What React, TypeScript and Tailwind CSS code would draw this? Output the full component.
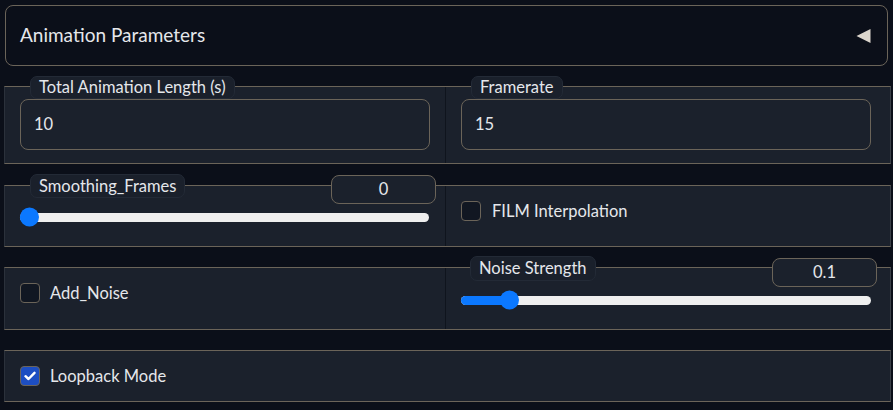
import React from "react";

const FONT = "font-['Lato','Noto_Sans',sans-serif]";

function Checkbox({ checked }: { checked?: boolean }) {
  return (
    <div
      className={
        "flex h-[20px] w-[20px] shrink-0 items-center justify-center rounded-[4px] border " +
        (checked ? "border-[#6b6459] bg-[#1d4ec2]" : "border-[#6b6459] bg-[#111722]")
      }
    >
      {checked && (
        <svg width="12" height="10" viewBox="0 0 12 10">
          <path d="M1.5 5.2 L4.5 8 L10.5 1.8" fill="none" stroke="#ffffff" strokeWidth="2.4" strokeLinecap="round" strokeLinejoin="round" />
        </svg>
      )}
    </div>
  );
}

function Pill({ children, h }: { children: React.ReactNode; h: string }) {
  return (
    <div className={"flex items-center rounded-[7px] border border-[#232a36] bg-[#1a202b] px-[8px] text-[16.5px] text-[#e5e7eb] " + h}>
      {children}
    </div>
  );
}

function Slider({ frac }: { frac: number }) {
  return (
    <div className="relative flex h-[20px] items-center">
      <div className="relative h-[9px] w-full rounded-full bg-[#efefef]">
        <div
          className="absolute left-0 top-0 h-full rounded-full bg-[#0b78ff]"
          style={{ width: `calc(${frac} * (100% - 19px) + 9.5px)` }}
        />
        <div
          className="absolute top-1/2 h-[19px] w-[19px] -translate-y-1/2 rounded-full bg-[#0b78ff]"
          style={{ left: `calc(${frac} * (100% - 19px))` }}
        />
      </div>
    </div>
  );
}

function NumberBox({ value }: { value: string }) {
  return (
    <div className="flex h-[29px] w-[105px] items-center justify-center rounded-[8px] border border-[#6b6459] bg-[#1b212c] text-[16.5px] text-[#e5e7eb]">
      {value}
    </div>
  );
}

function Row({ children, h }: { children: React.ReactNode; h: string }) {
  return (
    <div className={"ml-[4px] flex w-[887px] border-y border-l border-r border-y-[#6b6459] border-l-[#2b313b] border-r-[#3a3f47] bg-[#1b212c] " + h}>
      {children}
    </div>
  );
}

export default function App() {
  return (
    <div className={"h-[410px] w-[893px] overflow-hidden bg-[#0b0f19] pt-[5px] text-[#e5e7eb] " + FONT}>
      {/* Accordion header */}
      <div className="mx-[5px] flex h-[61px] items-center justify-between rounded-[8px] border border-[#6b6459] pl-[14px] pr-[16px]">
        <span className="text-[19px] text-[#e5e7eb]">Animation Parameters</span>
        <svg width="15" height="16" viewBox="0 0 15 16">
          <path d="M0.5 8 L14.5 1 L14.5 15 Z" fill="#dcd6cd" />
        </svg>
      </div>

      {/* Row 1 */}
      <div className="mt-[20px]">
        <Row h="h-[78px]">
          <div className="flex w-[441px] flex-col border-r border-[#0f141d] px-[15px]">
            <div className="-mt-[11px] ml-[10px] flex">
              <Pill h="h-[23px]">Total Animation Length (s)</Pill>
            </div>
            <div className="flex h-[51px] items-center rounded-[8px] border border-[#6b6459] bg-[#1b212c] px-[13px] text-[16.5px]">10</div>
          </div>
          <div className="flex flex-1 flex-col pl-[15px] pr-[19px]">
            <div className="-mt-[11px] ml-[10px] flex">
              <Pill h="h-[23px]">Framerate</Pill>
            </div>
            <div className="flex h-[51px] items-center rounded-[8px] border border-[#6b6459] bg-[#1b212c] px-[13px] text-[16.5px]">15</div>
          </div>
        </Row>
      </div>

      {/* Row 2 */}
      <div className="mt-[21px]">
        <Row h="h-[62px]">
          <div className="flex w-[441px] flex-col border-r border-[#0f141d] pl-[15px] pr-[16px]">
            <div className="-mt-[11px] mr-[-7px] flex items-start justify-between">
              <div className="-mt-[1px] ml-[10px]">
                <Pill h="h-[24px]">Smoothing_Frames</Pill>
              </div>
              <NumberBox value="0" />
            </div>
            <div className="mt-[3px]">
              <Slider frac={0} />
            </div>
          </div>
          <div className="flex flex-1 items-start gap-[11px] pl-[15px] pt-[15px]">
            <Checkbox />
            <span className="text-[16.5px] leading-[20px]">FILM Interpolation</span>
          </div>
        </Row>
      </div>

      {/* Row 3 */}
      <div className="mt-[20px]">
        <Row h="h-[63px]">
          <div className="flex w-[441px] items-start gap-[10px] border-r border-[#0f141d] pl-[15px] pt-[15px]">
            <Checkbox />
            <span className="text-[16.5px] leading-[20px]">Add_Noise</span>
          </div>
          <div className="flex flex-1 flex-col pl-[15px] pr-[19px]">
            <div className="-mt-[10px] mr-[-6px] flex items-start justify-between">
              <div className="-mt-[2px] ml-[9px]">
                <Pill h="h-[25px]">Noise Strength</Pill>
              </div>
              <NumberBox value="0.1" />
            </div>
            <div className="mt-[3px]">
              <Slider frac={0.1} />
            </div>
          </div>
        </Row>
      </div>

      {/* Row 4 */}
      <div className="mt-[20px]">
        <Row h="h-[52px]">
          <div className="flex flex-1 items-start gap-[10px] pl-[15px] pt-[15px]">
            <Checkbox checked />
            <span className="text-[16.5px] leading-[20px]">Loopback Mode</span>
          </div>
        </Row>
      </div>
    </div>
  );
}
